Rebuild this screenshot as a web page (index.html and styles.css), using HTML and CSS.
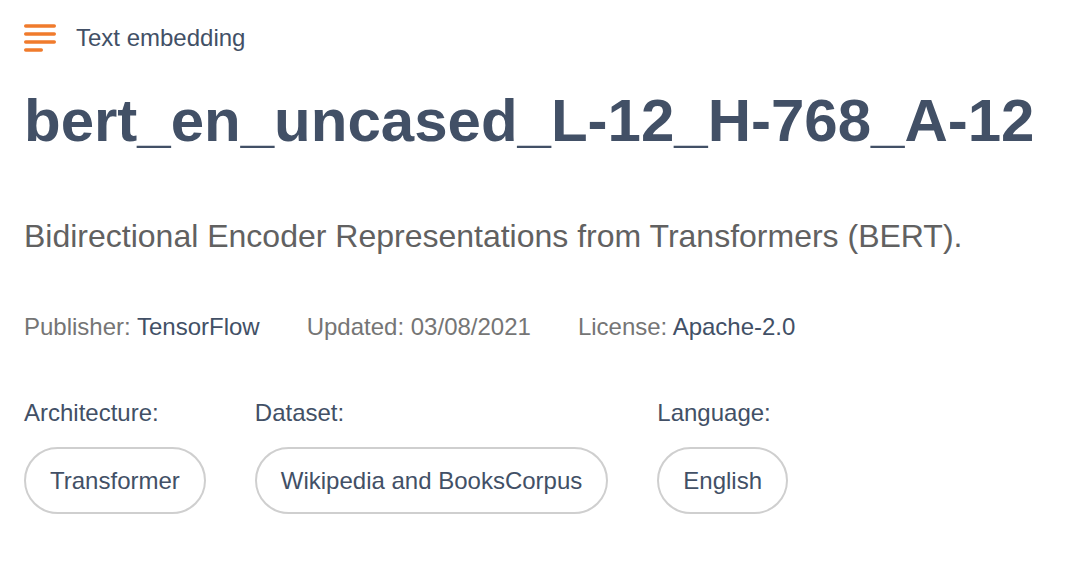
FILE: index.html
```html
<!DOCTYPE html>
<html lang="en">
<head>
<meta charset="utf-8">
<title>bert_en_uncased_L-12_H-768_A-12</title>
<link rel="stylesheet" href="styles.css">
</head>
<body>
<main class="page">
  <div class="category">
    <svg class="category-icon" width="32" height="28" viewBox="0 0 32 28" aria-hidden="true">
      <g stroke="#f07b2c" stroke-width="3.4" stroke-linecap="round">
        <line x1="1.7" y1="2" x2="30.3" y2="2"/>
        <line x1="1.7" y1="10" x2="30.3" y2="10"/>
        <line x1="1.7" y1="18" x2="30.3" y2="18"/>
        <line x1="1.7" y1="26" x2="17.3" y2="26"/>
      </g>
    </svg>
    <span class="category-name">Text embedding</span>
  </div>
  <h1 class="title">bert_en_uncased_L-12_H-768_A-12</h1>
  <p class="description">Bidirectional Encoder Representations from Transformers (BERT).</p>
  <div class="meta">
    <span class="meta-item"><span class="meta-label">Publisher:</span> <span class="meta-value">TensorFlow</span></span>
    <span class="meta-item"><span class="meta-label">Updated:</span> <span class="meta-label">03/08/2021</span></span>
    <span class="meta-item"><span class="meta-label">License:</span> <span class="meta-value">Apache-2.0</span></span>
  </div>
  <div class="facets">
    <div class="facet">
      <div class="facet-label">Architecture:</div>
      <div class="chip">Transformer</div>
    </div>
    <div class="facet">
      <div class="facet-label">Dataset:</div>
      <div class="chip">Wikipedia and BooksCorpus</div>
    </div>
    <div class="facet">
      <div class="facet-label">Language:</div>
      <div class="chip">English</div>
    </div>
  </div>
</main>
</body>
</html>
```

FILE: styles.css
```css
* {
  box-sizing: border-box;
}

html, body {
  margin: 0;
  padding: 0;
  background: #ffffff;
}

body {
  font-family: "Liberation Sans", Arial, Helvetica, sans-serif;
  color: #425066;
}

.page {
  padding: 22px 24px 0 24px;
}

.category {
  display: flex;
  align-items: center;
  gap: 20px;
  height: 32px;
}

.category-icon {
  display: block;
  flex: none;
}

.category-name {
  font-size: 24px;
  line-height: 32px;
  color: #425066;
}

.title {
  margin: 31px 0 0 0;
  font-size: 60px;
  line-height: 72px;
  font-weight: 700;
  color: #425066;
  white-space: nowrap;
}

.description {
  margin: 59px 0 0 0;
  font-size: 32px;
  line-height: 40px;
  color: #616161;
}

.meta {
  margin-top: 55px;
  display: flex;
  gap: 47px;
  font-size: 24px;
  line-height: 32px;
}

.meta-label {
  color: #757575;
}

.meta-value {
  color: #425066;
}

.facets {
  margin-top: 54px;
  display: flex;
  gap: 49px;
}

.facet {
  display: flex;
  flex-direction: column;
  align-items: flex-start;
  gap: 18px;
}

.facet-label {
  font-size: 24px;
  line-height: 32px;
  color: #425066;
}

.chip {
  height: 67px;
  display: flex;
  align-items: center;
  padding: 0 24px;
  border: 2px solid #cfcfcf;
  border-radius: 34px;
  font-size: 24px;
  line-height: 32px;
  color: #425066;
  white-space: nowrap;
}
```
